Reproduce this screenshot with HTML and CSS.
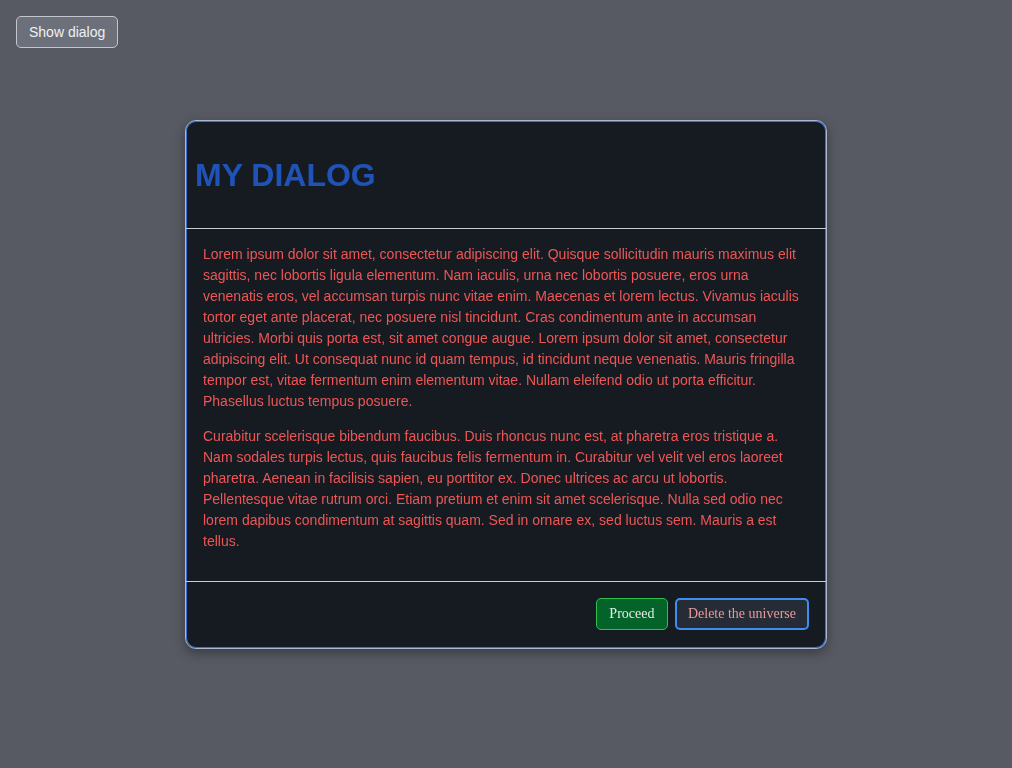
FILE: index.html
```html
<!DOCTYPE html>
<html>
<head>
<meta charset="utf-8">
<link rel="stylesheet" href="styles.css">
</head>
<body>
<button class="show-btn">Show dialog</button>
<div class="overlay">
  <div class="dialog">
    <header class="dlg-header">
      <h1 class="dlg-title">MY DIALOG</h1>
    </header>
    <div class="dlg-body">
      <p>Lorem ipsum dolor sit amet, consectetur adipiscing elit. Quisque sollicitudin mauris maximus elit sagittis, nec lobortis ligula elementum. Nam iaculis, urna nec lobortis posuere, eros urna venenatis eros, vel accumsan turpis nunc vitae enim. Maecenas et lorem lectus. Vivamus iaculis tortor eget ante placerat, nec posuere nisl tincidunt. Cras condimentum ante in accumsan ultricies. Morbi quis porta est, sit amet congue augue. Lorem ipsum dolor sit amet, consectetur adipiscing elit. Ut consequat nunc id quam tempus, id tincidunt neque venenatis. Mauris fringilla tempor est, vitae fermentum enim elementum vitae. Nullam eleifend odio ut porta efficitur. Phasellus luctus tempus posuere.</p>
      <p>Curabitur scelerisque bibendum faucibus. Duis rhoncus nunc est, at pharetra eros tristique a. Nam sodales turpis lectus, quis faucibus felis fermentum in. Curabitur vel velit vel eros laoreet pharetra. Aenean in facilisis sapien, eu porttitor ex. Donec ultrices ac arcu ut lobortis. Pellentesque vitae rutrum orci. Etiam pretium et enim sit amet scelerisque. Nulla sed odio nec lorem dapibus condimentum at sagittis quam. Sed in ornare ex, sed luctus sem. Mauris a est tellus.</p>
    </div>
    <footer class="dlg-footer">
      <button class="btn btn-proceed">Proceed</button>
      <button class="btn btn-delete">Delete the universe</button>
    </footer>
  </div>
</div>
</body>
</html>
```
FILE: styles.css
```css
html, body {
  margin: 0;
  padding: 0;
}
body {
  background: #575a62;
  font-family: "Liberation Sans", Arial, sans-serif;
  min-height: 100vh;
  padding: 16px;
  box-sizing: border-box;
}
.show-btn {
  display: block;
  height: 32px;
  padding: 0 12px;
  background: #6c707a;
  color: #f0f0f2;
  border: 1px solid #c3c6cc;
  border-radius: 5px;
  font-family: "Liberation Sans", Arial, sans-serif;
  font-size: 14px;
}
.overlay {
  position: fixed;
  inset: 0;
  display: flex;
  align-items: center;
  justify-content: center;
}
.dialog {
  width: 642px;
  box-sizing: border-box;
  background: #161b22;
  border: 1px solid #a9b8d8;
  border-radius: 11px;
  box-shadow: inset 0 0 0 1px #3a6fd8, 0 4px 12px rgba(0,0,0,0.35);
  overflow: hidden;
}
.dlg-header {
  padding: 36px 9px 34px;
  border-bottom: 1px solid #c9ced6;
}
.dlg-title {
  margin: 0;
  font-size: 32px;
  font-weight: bold;
  color: #1f53b8;
  line-height: 37px;
}
.dlg-body {
  padding: 15px 17px 15px 17px;
  color: #ee5656;
  font-size: 14px;
  line-height: 21px;
}
.dlg-body p {
  margin: 0 0 14px;
}
.dlg-footer {
  border-top: 1px solid #c9ced6;
  padding: 16px 17px 18px;
  display: flex;
  justify-content: flex-end;
  gap: 7px;
}
.btn {
  height: 32px;
  box-sizing: border-box;
  font-family: "Liberation Serif", "Times New Roman", serif;
  font-size: 14px;
  border-radius: 5px;
  padding: 0 12px;
}
.btn-proceed {
  background: #046328;
  color: #e6ece8;
  border: 1px solid #2fbf4d;
  padding: 0 12.5px;
}
.btn-delete {
  background: #262c36;
  color: #e89a9a;
  border: 2px solid #3d8ef0;
  padding: 0 11px;
}
```
